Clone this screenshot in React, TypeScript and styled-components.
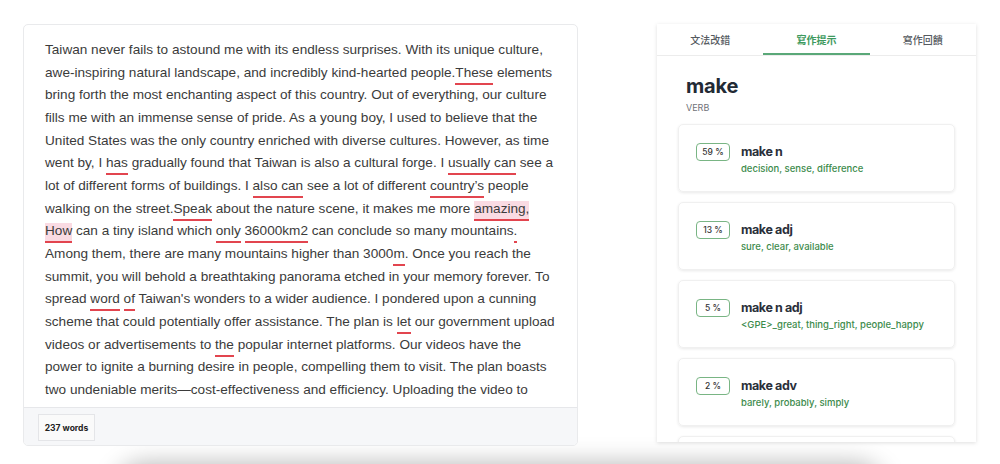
import React from 'react';
import styled, { createGlobalStyle } from 'styled-components';

const GlobalStyle = createGlobalStyle`
  html, body {
    margin: 0;
    padding: 0;
    background: #ffffff;
  }
  body {
    font-family: Inter, "Noto Sans", sans-serif;
    overflow: hidden;
  }
`;

type Seg = string | { t: string; hl?: boolean };

const lines: Seg[][] = [
  ['Taiwan never fails to astound me with its endless surprises. With its unique culture,'],
  ['awe-inspiring natural landscape, and incredibly kind-hearted people.', { t: 'These' }, ' elements'],
  ['bring forth the most enchanting aspect of this country. Out of everything, our culture'],
  ['fills me with an immense sense of pride. As a young boy, I used to believe that the'],
  ['United States was the only country enriched with diverse cultures. However, as time'],
  ['went by, I ', { t: 'has' }, ' gradually found that Taiwan is also a cultural forge. I ', { t: 'usually can' }, ' see a'],
  ['lot of different forms of buildings. I ', { t: 'also can' }, ' see a lot of different ', { t: 'country’s' }, ' people'],
  ['walking on the street.', { t: 'Speak' }, ' about the nature scene, it makes me more ', { t: 'amazing,', hl: true }],
  [{ t: 'How', hl: true }, ' can a tiny island which ', { t: 'only' }, ' ', { t: '36000km2' }, ' can conclude so many mountains', { t: '.' }],
  ['Among them, there are many mountains higher than 3000', { t: 'm' }, '. Once you reach the'],
  ['summit, you will behold a breathtaking panorama etched in your memory forever. To'],
  ['spread ', { t: 'word' }, ' ', { t: 'of' }, " Taiwan's wonders to a wider audience. I pondered upon a cunning"],
  ['scheme that could potentially offer assistance. The plan is ', { t: 'let' }, ' our government upload'],
  ['videos or advertisements to ', { t: 'the' }, ' popular internet platforms. Our videos have the'],
  ['power to ignite a burning desire in people, compelling them to visit. The plan boasts'],
  ['two undeniable merits—cost-effectiveness and efficiency. Uploading the video to'],
];

const patterns = [
  { pct: '59 %', title: 'make n', words: 'decision, sense, difference' },
  { pct: '13 %', title: 'make adj', words: 'sure, clear, available' },
  { pct: '5 %', title: 'make n adj', words: '<GPE>_great, thing_right, people_happy' },
  { pct: '2 %', title: 'make adv', words: 'barely, probably, simply' },
];

function App() {
  return (
    <Page>
      <GlobalStyle />
      <Row>
        <Editor>
          <TextArea>
            {lines.map((line, i) => (
              <Line key={i}>
                {line.map((seg, j) =>
                  typeof seg === 'string' ? (
                    <React.Fragment key={j}>{seg}</React.Fragment>
                  ) : (
                    <Mark key={j} $hl={seg.hl}>{seg.t}</Mark>
                  )
                )}
              </Line>
            ))}
          </TextArea>
          <EditorFooter>
            <WordCount>237 words</WordCount>
          </EditorFooter>
        </Editor>

        <Panel>
          <Tabs>
            <Tab>文法改錯</Tab>
            <Tab $active>寫作提示</Tab>
            <Tab>寫作回饋</Tab>
          </Tabs>
          <PanelBody>
            <Heading>
              <Headword>make</Headword>
              <Pos>VERB</Pos>
            </Heading>
            <CardList>
              {patterns.map((p) => (
                <PatternCard key={p.title}>
                  <Badge>{p.pct}</Badge>
                  <PatternInfo>
                    <PatternTitle>{p.title}</PatternTitle>
                    <PatternWords>{p.words}</PatternWords>
                  </PatternInfo>
                </PatternCard>
              ))}
              <PatternCard />
            </CardList>
          </PanelBody>
        </Panel>
      </Row>
      <NextSection />
    </Page>
  );
}

const Page = styled.div`
  padding: 24px 24px 0 23px;
`;

const Row = styled.div`
  display: flex;
  align-items: flex-start;
  gap: 79px;
`;

const Editor = styled.div`
  width: 555px;
  height: 422px;
  box-sizing: border-box;
  border: 1px solid #e9eaec;
  border-radius: 5px;
  display: flex;
  flex-direction: column;
  overflow: hidden;
  background: #fff;
`;

const TextArea = styled.div`
  flex: 1;
  padding: 14px 21px 0 21px;
  overflow: hidden;
  font-family: "Liberation Sans", Arial, sans-serif;
  font-size: 13.6px;
  line-height: 22.67px;
  color: #3b3b3b;
`;

const Line = styled.div`
  white-space: nowrap;
`;

const Mark = styled.span<{ $hl?: boolean }>`
  border-bottom: 2px solid #e2454f;
  padding-bottom: 3px;
  background: ${(p) => (p.$hl ? '#fadbe3' : 'transparent')};
`;

const EditorFooter = styled.div`
  height: 38px;
  flex-shrink: 0;
  border-top: 1px solid #e6e7ea;
  background: #f6f7f9;
  padding: 6px 14px;
  box-sizing: border-box;
`;

const WordCount = styled.div`
  display: inline-flex;
  align-items: center;
  justify-content: center;
  width: 57px;
  height: 27px;
  box-sizing: border-box;
  border: 1px solid #e4e5e8;
  background: #fafafa;
  font-family: Inter, sans-serif;
  font-size: 8.5px;
  font-weight: 700;
  color: #222;
`;

const Panel = styled.div`
  width: 319px;
  height: 418px;
  box-sizing: border-box;
  background: #fff;
  box-shadow: 0 1px 4px rgba(0, 0, 0, 0.13);
  overflow: hidden;
`;

const Tabs = styled.div`
  display: grid;
  grid-template-columns: 1fr 1fr 1fr;
  height: 32px;
  border-bottom: 1px solid #ececec;
  box-sizing: border-box;
`;

const Tab = styled.div<{ $active?: boolean }>`
  display: flex;
  align-items: center;
  justify-content: center;
  font-family: "Noto Sans CJK TC", sans-serif;
  font-size: 10px;
  font-weight: ${(p) => (p.$active ? 700 : 500)};
  color: ${(p) => (p.$active ? '#3e9a5e' : '#555a60')};
  border-bottom: 2px solid ${(p) => (p.$active ? '#5aa878' : 'transparent')};
  padding-top: 1px;
`;

const PanelBody = styled.div`
  padding: 18px 21px 0 21px;
`;

const Heading = styled.div`
  padding-left: 8px;
`;

const Headword = styled.div`
  font-family: Inter, sans-serif;
  font-size: 20px;
  line-height: 24px;
  font-weight: 700;
  color: #222a35;
  letter-spacing: -0.2px;
`;

const Pos = styled.div`
  margin-top: 4px;
  font-family: Inter, sans-serif;
  font-size: 9px;
  line-height: 12px;
  color: #6f7278;
`;

const CardList = styled.div`
  margin-top: 10px;
  display: flex;
  flex-direction: column;
  gap: 10px;
`;

const PatternCard = styled.div`
  height: 68px;
  box-sizing: border-box;
  padding: 18px 17px;
  border: 1px solid #f0f0f0;
  border-radius: 5px;
  box-shadow: 0 1px 3px rgba(0, 0, 0, 0.09);
  display: flex;
  gap: 11px;
  align-items: flex-start;
  flex-shrink: 0;
`;

const Badge = styled.div`
  width: 34px;
  height: 18px;
  box-sizing: border-box;
  border: 1px solid #79b584;
  border-radius: 4px;
  display: flex;
  align-items: center;
  justify-content: center;
  font-family: Inter, sans-serif;
  font-size: 8.5px;
  font-weight: 500;
  color: #333;
`;

const PatternInfo = styled.div`
  display: flex;
  flex-direction: column;
`;

const PatternTitle = styled.div`
  font-family: Inter, sans-serif;
  font-size: 12.5px;
  line-height: 18px;
  font-weight: 700;
  color: #2a2f3a;
  letter-spacing: -0.4px;
`;

const PatternWords = styled.div`
  margin-top: 2px;
  font-family: Inter, sans-serif;
  font-size: 9.5px;
  line-height: 12px;
  font-weight: 500;
  color: #3d8b4c;
`;

const NextSection = styled.div`
  margin: 20px auto 0;
  width: 770px;
  height: 60px;
  background: #fff;
  box-shadow: 0 -3px 24px rgba(0, 0, 0, 0.28);
  border-radius: 30px;
`;

export default App;
